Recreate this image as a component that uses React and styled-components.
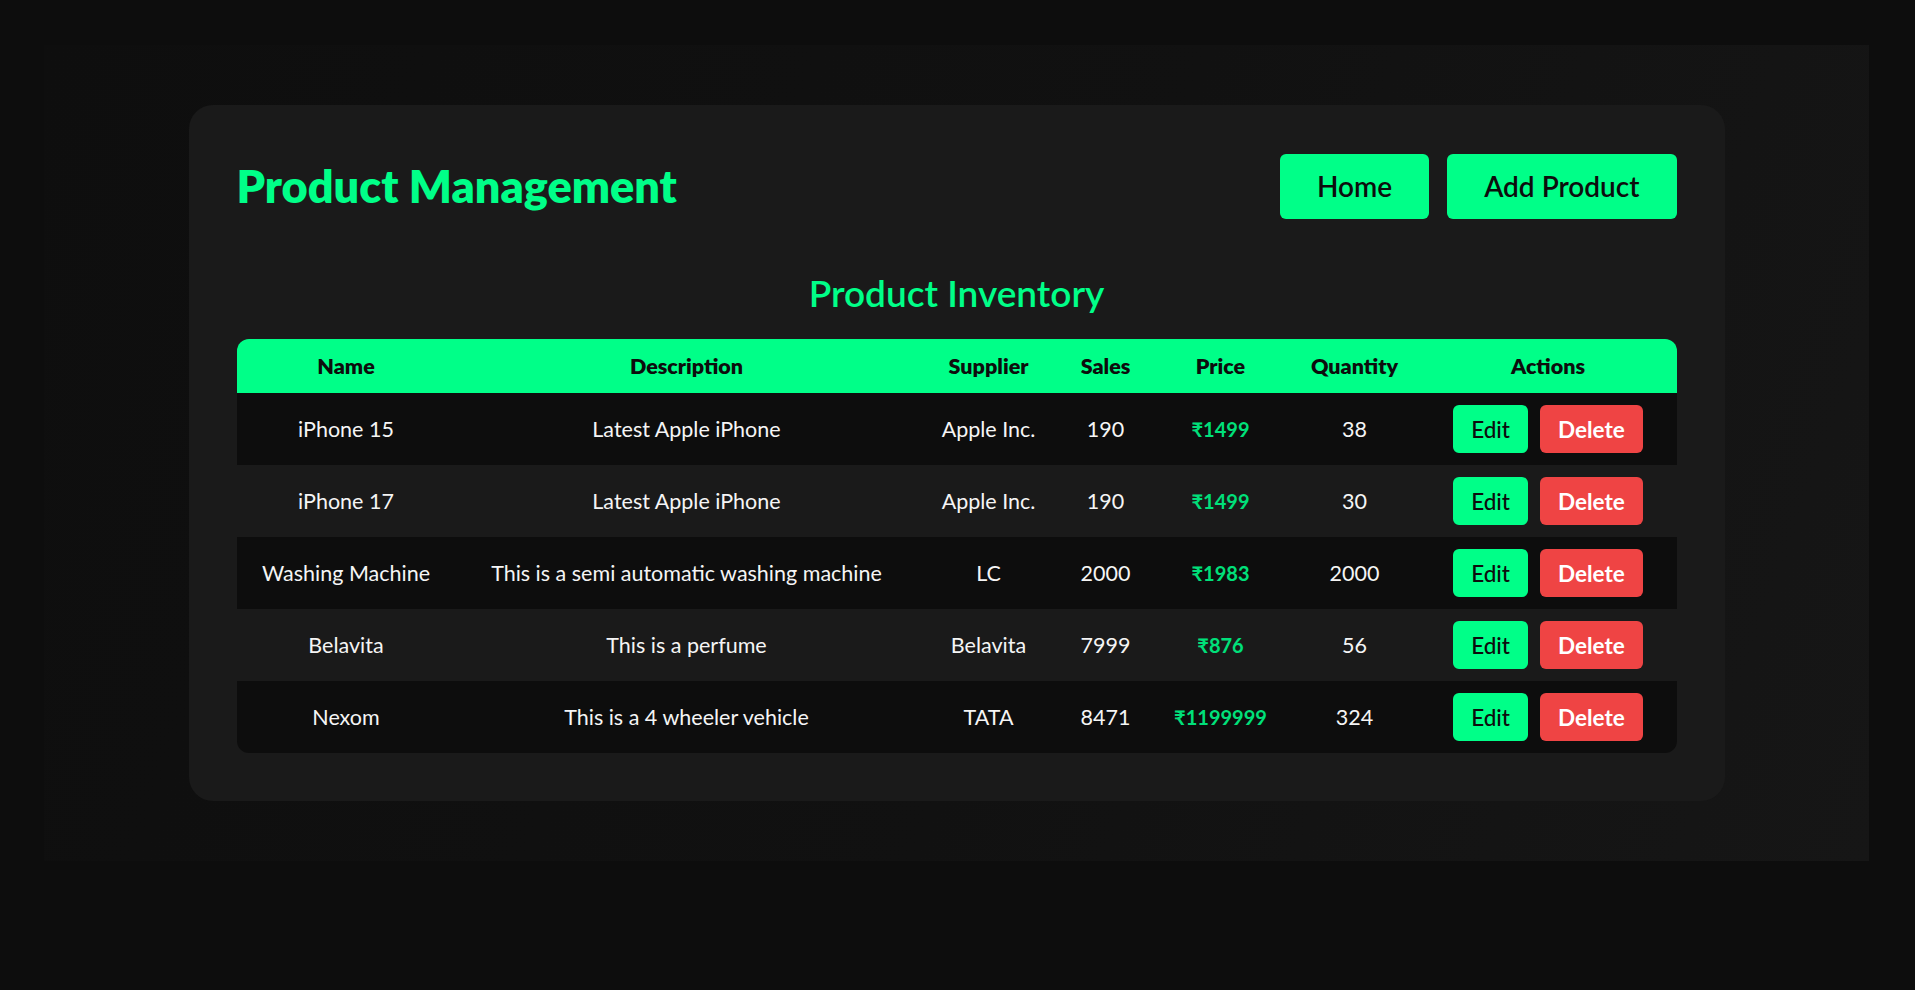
import React from "react";
import styled, { createGlobalStyle } from "styled-components";

const FONT = `"Lato", "Open Sans", "Noto Sans", sans-serif`;

const GlobalStyle = createGlobalStyle`
  html, body {
    margin: 0;
    padding: 0;
    background: #0d0d0d;
    font-family: ${FONT};
  }
  * { box-sizing: border-box; }
`;

const Page = styled.div`
  padding: 45px 46px 129px 44px;
  min-height: 990px;
`;

const Panel = styled.div`
  display: flex;
  justify-content: center;
  padding: 60px 0;
  background: linear-gradient(110deg, #0e0e0e 0%, #111111 55%, #161616 100%);
`;

const Card = styled.div`
  width: 1536px;
  padding: 48px;
  background: #1a1a1a;
  border-radius: 24px;
`;

const Header = styled.header`
  display: flex;
  align-items: center;
  justify-content: space-between;
  height: 66px;
`;

const Title = styled.h1`
  margin: 0;
  font-size: 45px;
  font-weight: 800;
  color: #00ff88;
  line-height: 66px;
`;

const Nav = styled.nav`
  display: flex;
  gap: 18px;
`;

const NavButton = styled.button`
  height: 65px;
  padding: 0 37px;
  border: none;
  border-radius: 6px;
  background: #00ff88;
  color: #0d0d0d;
  font-family: ${FONT};
  font-size: 28px;
  font-weight: 600;
  cursor: pointer;
`;

const SubTitle = styled.h2`
  margin: 50px 0 22px;
  text-align: center;
  font-size: 37px;
  font-weight: 600;
  line-height: 48px;
  color: #00ff88;
`;

const Table = styled.table`
  width: 1440px;
  border-collapse: separate;
  border-spacing: 0;
  table-layout: fixed;
  border-radius: 12px;
  overflow: hidden;
`;

const Th = styled.th`
  height: 54px;
  padding: 0;
  background: #00ff88;
  color: #0d0d0d;
  font-size: 21.5px;
  font-weight: 800;
  text-align: center;
`;

const Tr = styled.tr`
  background: ${(p) => (p.$alt ? "#1a1a1a" : "#0d0d0d")};
`;

const Td = styled.td`
  height: 72px;
  padding: 0;
  text-align: center;
  font-size: ${(p) => (p.$price ? "20px" : "21.5px")};
  color: ${(p) => (p.$price ? "#00e07a" : "#f5f5f5")};
  font-weight: ${(p) => (p.$price ? 700 : 400)};
`;

const Actions = styled.div`
  display: flex;
  justify-content: center;
  gap: 12px;
`;

const ActionButton = styled.button`
  height: 48px;
  padding: 0 18px;
  border: none;
  border-radius: 6px;
  font-family: ${FONT};
  font-size: 22.5px;
  cursor: pointer;
  background: ${(p) => (p.$danger ? "#ef4444" : "#00ff88")};
  color: ${(p) => (p.$danger ? "#ffffff" : "#0d0d0d")};
  font-weight: ${(p) => (p.$danger ? 700 : 500)};
`;

const columns = [
  ["Name", 219],
  ["Description", 462],
  ["Supplier", 142],
  ["Sales", 92],
  ["Price", 138],
  ["Quantity", 130],
  ["Actions", 257],
];

const products = [
  { name: "iPhone 15", desc: "Latest Apple iPhone", supplier: "Apple Inc.", sales: 190, price: 1499, qty: 38 },
  { name: "iPhone 17", desc: "Latest Apple iPhone", supplier: "Apple Inc.", sales: 190, price: 1499, qty: 30 },
  { name: "Washing Machine", desc: "This is a semi automatic washing machine", supplier: "LC", sales: 2000, price: 1983, qty: 2000 },
  { name: "Belavita", desc: "This is a perfume", supplier: "Belavita", sales: 7999, price: 876, qty: 56 },
  { name: "Nexom", desc: "This is a 4 wheeler vehicle", supplier: "TATA", sales: 8471, price: 1199999, qty: 324 },
];

export default function App() {
  return (
    <>
      <GlobalStyle />
      <Page>
        <Panel>
          <Card>
            <Header>
              <Title>Product Management</Title>
              <Nav>
                <NavButton>Home</NavButton>
                <NavButton>Add Product</NavButton>
              </Nav>
            </Header>
            <SubTitle>Product Inventory</SubTitle>
            <Table>
              <colgroup>
                {columns.map(([c, w]) => (
                  <col key={c} style={{ width: w }} />
                ))}
              </colgroup>
              <thead>
                <tr>
                  {columns.map(([c]) => (
                    <Th key={c}>{c}</Th>
                  ))}
                </tr>
              </thead>
              <tbody>
                {products.map((p, i) => (
                  <Tr key={p.name} $alt={i % 2 === 1}>
                    <Td>{p.name}</Td>
                    <Td>{p.desc}</Td>
                    <Td>{p.supplier}</Td>
                    <Td>{p.sales}</Td>
                    <Td $price>₹{p.price}</Td>
                    <Td>{p.qty}</Td>
                    <Td>
                      <Actions>
                        <ActionButton>Edit</ActionButton>
                        <ActionButton $danger>Delete</ActionButton>
                      </Actions>
                    </Td>
                  </Tr>
                ))}
              </tbody>
            </Table>
          </Card>
        </Panel>
      </Page>
    </>
  );
}
